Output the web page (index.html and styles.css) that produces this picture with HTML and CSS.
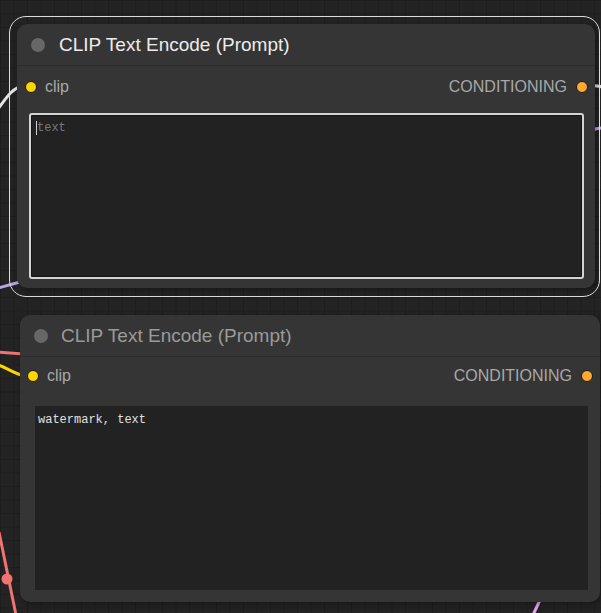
FILE: index.html
```html
<!DOCTYPE html>
<html>
<head>
<meta charset="utf-8">
<link rel="stylesheet" href="styles.css">
</head>
<body>
<div class="canvas">
  <svg class="wires" width="601" height="613" viewBox="0 0 601 613">
    <path d="M -10 118 C 4 104, 8 90, 22 86" stroke="#e2e2e2" stroke-width="3" fill="none"/>
    <path d="M -2 288 L 20 282" stroke="#b9a3e3" stroke-width="3" fill="none"/>
    <path d="M 590 86 C 596 85, 600 86, 606 88" stroke="#e2e2e2" stroke-width="3" fill="none"/>
    <path d="M 590 130 C 596 129, 600 128, 606 127" stroke="#b9a3e3" stroke-width="3" fill="none"/>
    <path d="M -2 352 L 24 354" stroke="#f07272" stroke-width="3" fill="none"/>
    <path d="M -2 365 C 8 368, 14 374, 26 376" stroke="#ffd500" stroke-width="3" fill="none"/>
    <path d="M -1 532 L 16 615" stroke="#f07272" stroke-width="3" fill="none"/>
    <circle cx="7" cy="579" r="5.5" fill="#f07272"/>
    <path d="M 540 600 L 533 615" stroke="#e6a2f0" stroke-width="3" fill="none"/>
  </svg>

  <div class="node node-a selected">
    <div class="title">
      <span class="title-dot"></span>
      <span class="title-text">CLIP Text Encode (Prompt)</span>
    </div>
    <div class="slots">
      <div class="slot">
        <span class="dot dot-clip"></span>
        <span class="slot-label">clip</span>
      </div>
      <div class="slot">
        <span class="slot-label">CONDITIONING</span>
        <span class="dot dot-cond"></span>
      </div>
    </div>
    <div class="text-wrap">
      <div class="textarea focused"><span class="caret"></span><span class="placeholder">text</span></div>
    </div>
  </div>

  <div class="node node-b">
    <div class="title">
      <span class="title-dot"></span>
      <span class="title-text dim">CLIP Text Encode (Prompt)</span>
    </div>
    <div class="slots">
      <div class="slot">
        <span class="dot dot-clip"></span>
        <span class="slot-label">clip</span>
      </div>
      <div class="slot">
        <span class="slot-label">CONDITIONING</span>
        <span class="dot dot-cond"></span>
      </div>
    </div>
    <div class="text-wrap">
      <div class="textarea">watermark, text</div>
    </div>
  </div>
</div>
</body>
</html>
```

FILE: styles.css
```css
html, body {
  margin: 0;
  padding: 0;
  background: #222;
}

.canvas {
  position: relative;
  width: 601px;
  height: 613px;
  overflow: hidden;
  background-color: #232323;
  background-image:
    linear-gradient(to right, #1d1d1d 1px, transparent 1px),
    linear-gradient(to bottom, #1d1d1d 1px, transparent 1px);
  background-size: 13.5px 13.5px;
  font-family: "Liberation Sans", Arial, sans-serif;
}

.wires {
  position: absolute;
  left: 0;
  top: 0;
}

.node {
  position: absolute;
  box-sizing: border-box;
  background: #353535;
  border-radius: 10px;
  display: flex;
  flex-direction: column;
  box-shadow: 2px 2px 6px rgba(0, 0, 0, 0.35);
}

.node-a {
  left: 17px;
  top: 24px;
  width: 578px;
  height: 264px;
}

.node-a.selected::before {
  content: "";
  position: absolute;
  left: -8px;
  top: -8px;
  right: -5px;
  bottom: -9px;
  border: 1.5px solid #dcdcdc;
  border-radius: 17px;
  pointer-events: none;
}

.node-b {
  left: 20px;
  top: 315px;
  width: 580px;
  height: 287px;
}

.title {
  height: 42px;
  flex: none;
  box-sizing: border-box;
  border-bottom: 1px solid #2c2c2c;
  display: flex;
  align-items: center;
  padding-left: 14px;
}

.title-dot {
  width: 14px;
  height: 14px;
  border-radius: 50%;
  background: #676767;
  flex: none;
}

.title-text {
  margin-left: 14px;
  font-size: 19px;
  color: #ececec;
  white-space: nowrap;
}

.title-text.dim {
  color: #9a9a9a;
  margin-left: 13px;
}

.slots {
  display: flex;
  justify-content: space-between;
  align-items: center;
  height: 28px;
  margin-top: 7px;
  padding: 0 7px 0 8px;
  flex: none;
}

.node-b .slots {
  margin-top: 5px;
  padding: 0 7px 0 7px;
}

.slot {
  display: flex;
  align-items: center;
}

.dot {
  width: 12px;
  height: 12px;
  border-radius: 50%;
  box-sizing: border-box;
  border: 1px solid #1c1c1c;
  flex: none;
}

.dot-clip {
  background: #ffd500;
  margin-right: 8px;
}

.dot-cond {
  background: #ffa931;
  margin-left: 9px;
}

.slot-label {
  font-size: 16px;
  color: #a8a8a8;
  white-space: nowrap;
}

.text-wrap {
  flex: 1;
  display: flex;
  padding: 12px 11px 9px 12px;
}

.node-b .text-wrap {
  padding: 16px 12px 12px 15px;
}

.textarea {
  flex: 1;
  box-sizing: border-box;
  background: #222;
  font-family: "Liberation Mono", "DejaVu Sans Mono", monospace;
  font-size: 12px;
  line-height: 14px;
  color: #e0e0e0;
  padding: 7px 3px;
  white-space: pre;
}

.textarea.focused {
  border: 2px solid #d4d4d4;
  border-radius: 3px;
  box-shadow: inset 0 0 0 1px #151515;
  padding: 6px 5px;
}

.caret {
  display: inline-block;
  width: 1px;
  height: 14px;
  background: #cfcfcf;
  vertical-align: top;
}

.placeholder {
  color: #777;
}
```
